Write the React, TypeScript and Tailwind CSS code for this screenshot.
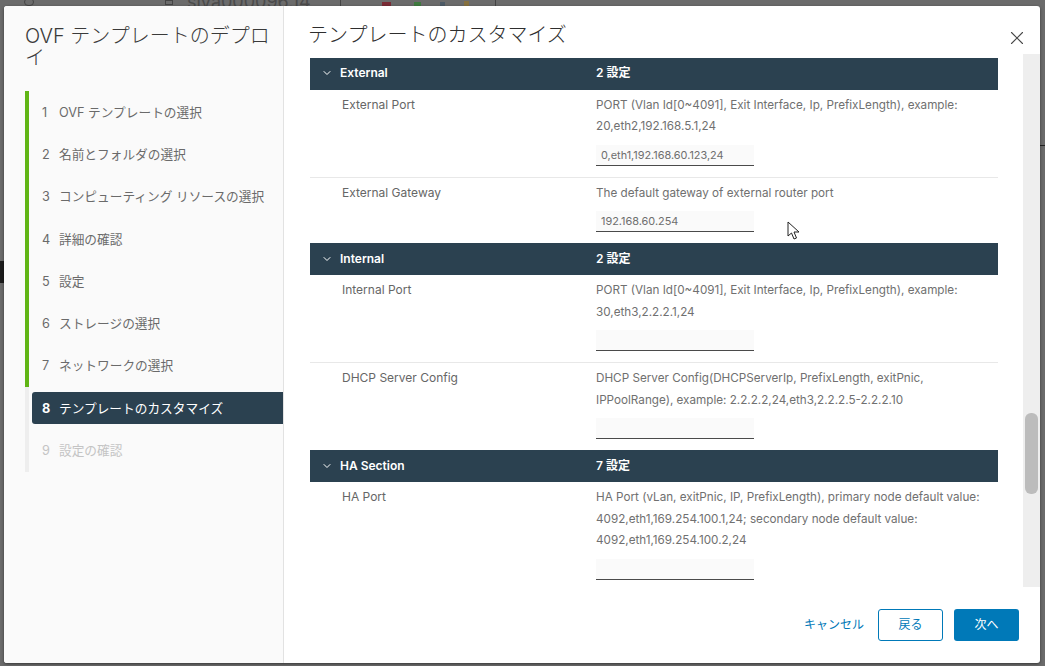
import React from 'react';
import { ChevronDown, X } from 'lucide-react';

const font = "font-['Inter','Noto_Sans_CJK_JP',sans-serif]";

const steps = [
  { n: 1, label: 'OVF テンプレートの選択', state: 'done' },
  { n: 2, label: '名前とフォルダの選択', state: 'done' },
  { n: 3, label: 'コンピューティング リソースの選択', state: 'done' },
  { n: 4, label: '詳細の確認', state: 'done' },
  { n: 5, label: '設定', state: 'done' },
  { n: 6, label: 'ストレージの選択', state: 'done' },
  { n: 7, label: 'ネットワークの選択', state: 'done' },
  { n: 8, label: 'テンプレートのカスタマイズ', state: 'active' },
  { n: 9, label: '設定の確認', state: 'todo' },
];

const Section = ({ name, count }: { name: string; count: string }) => (
  <div className="h-[32px] bg-[#2b4150] text-white flex items-center text-[12px] font-semibold shrink-0 pb-[1px]">
    <ChevronDown className="w-[12px] h-[12px] ml-[11px]" strokeWidth={2} />
    <span className="ml-[7px] w-[256px]">{name}</span>
    <span>{count}</span>
  </div>
);

const Field = ({
  label,
  lines,
  value,
  last,
}: {
  label: string;
  lines: string[];
  value?: string;
  last?: boolean;
}) => (
  <div className={`flex pl-[32px] ${last ? 'pb-[11px]' : 'pb-[11px] border-b border-[#e8e8e8]'}`}>
    <div className="w-[254px] text-[12px] leading-[21px] pt-[4px] text-[#666666]">{label}</div>
    <div className="flex-1 pt-[5px]">
      <div className="text-[11.7px] leading-[21.5px] text-[#707070]">
        {lines.map((l) => (
          <div key={l}>{l}</div>
        ))}
      </div>
      <div className="mt-[7px] w-[158px] h-[21px] bg-[#fafafa] border-b border-[#4a4a4a] px-[5px] text-[10.9px] leading-[20px] text-[#6e6e6e]">
        {value}
      </div>
    </div>
  </div>
);

export default function App() {
  return (
    <div className={`w-[1045px] h-[666px] bg-[#6b6b6b] overflow-hidden relative pt-[6px] pl-[4px] ${font}`}>
      {/* page behind the dialog, only its edges show */}
      <div className="absolute top-[-8px] left-[187px] text-[18px] leading-[20px] text-[#4a4a4a]">
        siva000096.14
      </div>
      <div className="absolute top-[-2px] left-[24px] w-[10px] h-[8px] rounded-full border border-[#444444]" />
      <div className="absolute top-0 left-[165px] w-[8px] h-[5px] border border-[#444444]" />
      <div className="absolute top-0 left-[340px] w-px h-[6px] bg-[#444444]" />
      <div className="absolute top-0 left-[495px] w-px h-[6px] bg-[#444444]" />
      <div className="absolute top-[2px] left-[382px] w-[9px] h-[4px] bg-[#7a2b35]" />
      <div className="absolute top-[2px] left-[414px] w-[7px] h-[4px] bg-[#3f7a3f]" />
      <div className="absolute top-[2px] left-[440px] w-[5px] h-[4px] bg-[#4d5a66]" />
      <div className="absolute top-[1px] left-[464px] w-[5px] h-[5px] bg-[#85703f]" />
      <div className="absolute top-[261px] left-0 w-[4px] h-[22px] bg-[#1c1c1c]" />
      <div className="absolute top-[145px] right-0 w-[5px] h-px bg-[#222222]" />

      <div className="relative w-[1036px] h-[657px] bg-white rounded-[3px] flex overflow-hidden shadow-[0_1px_3px_rgba(0,0,0,0.5)]">
        {/* wizard steps */}
        <aside className="w-[280px] shrink-0 bg-[#fafafa] border-r border-[#e2e2e2] pl-[21px] pt-[19px]">
          <h1 className="text-[20px] leading-[22px] font-light text-[#3a3a3a] pr-[4px] h-[66px]">
            OVF テンプレートのデプロイ
          </h1>
          <ul>
            {steps.map((s) => (
              <li key={s.n} className="flex h-[42.3px]">
                <div
                  className={`w-[4px] shrink-0 ${
                    s.state === 'done' ? 'bg-[#60b515]' : 'bg-[#eeeeee]'
                  }`}
                />
                <div
                  className={`flex-1 ml-[3px] my-[5px] pl-[10px] flex items-center gap-[7px] text-[12.7px] rounded-l-[3px] ${
                    s.state === 'active'
                      ? 'bg-[#2b4150] text-white font-bold'
                      : s.state === 'todo'
                        ? 'text-[#c4c4c4]'
                        : 'text-[#6a6a6a]'
                  }`}
                >
                  <span className="w-[10px]">{s.n}</span>
                  <span className={s.state === 'active' ? 'font-normal' : ''}>{s.label}</span>
                </div>
              </li>
            ))}
          </ul>
        </aside>

        {/* main pane */}
        <div className="flex-1 min-w-0 flex flex-col relative">
          <div className="h-[51px] shrink-0 pl-[24px] pt-[15px] text-[20px] leading-[28px] font-light text-[#2e2e2e]">
            テンプレートのカスタマイズ
          </div>
          <div className="flex flex-1 min-h-0">
            <div className="w-[715px] ml-[26px] mr-[25px] pt-[0.5px] overflow-hidden">
              <Section name="External" count="2 設定" />
              <Field
                label="External Port"
                lines={[
                  'PORT (Vlan Id[0~4091], Exit Interface, Ip, PrefixLength), example:',
                  '20,eth2,192.168.5.1,24',
                ]}
                value="0,eth1,192.168.60.123,24"
              />
              <Field
                label="External Gateway"
                lines={['The default gateway of external router port']}
                value="192.168.60.254"
                last
              />
              <Section name="Internal" count="2 設定" />
              <Field
                label="Internal Port"
                lines={[
                  'PORT (Vlan Id[0~4091], Exit Interface, Ip, PrefixLength), example:',
                  '30,eth3,2.2.2.1,24',
                ]}
              />
              <Field
                label="DHCP Server Config"
                lines={[
                  'DHCP Server Config(DHCPServerIp, PrefixLength, exitPnic,',
                  'IPPoolRange), example: 2.2.2.2,24,eth3,2.2.2.5-2.2.2.10',
                ]}
                last
              />
              <Section name="HA Section" count="7 設定" />
              <Field
                label="HA Port"
                lines={[
                  'HA Port (vLan, exitPnic, IP, PrefixLength), primary node default value:',
                  '4092,eth1,169.254.100.1,24; secondary node default value:',
                  '4092,eth1,169.254.100.2,24',
                ]}
                last
              />
            </div>
            <div className="w-[17px] shrink-0 bg-[#eeeeee] relative -mt-[3px]">
              <div className="absolute top-[359px] left-[2px] w-[13px] h-[81px] rounded-[6px] bg-[#bcbcbc]" />
            </div>
          </div>
          <div className="h-[76px] shrink-0 flex items-start justify-end pt-[22px] pr-[21px] text-[12px]">
            <button className="text-[#0079b8] mr-[14px] h-[32px]">キャンセル</button>
            <button className="w-[65px] h-[32px] mr-[11px] rounded-[3px] border border-[#0079b8] text-[#0079b8] bg-white">
              戻る
            </button>
            <button className="w-[65px] h-[32px] rounded-[3px] bg-[#0079b8] text-white">次へ</button>
          </div>
          <button className="absolute top-[21px] right-[12px] text-[#4a4a4a]">
            <X className="w-[22px] h-[22px]" strokeWidth={1.2} />
          </button>
        </div>
      </div>

      {/* mouse pointer */}
      <svg className="absolute left-[787px] top-[221px]" width="13" height="20" viewBox="0 0 13 20">
        <path d="M1 1 L1 15 L4.5 12 L7 18 L9.5 17 L7 11 L12 11 Z" fill="#fff" stroke="#222" strokeWidth="1" />
      </svg>
    </div>
  );
}
